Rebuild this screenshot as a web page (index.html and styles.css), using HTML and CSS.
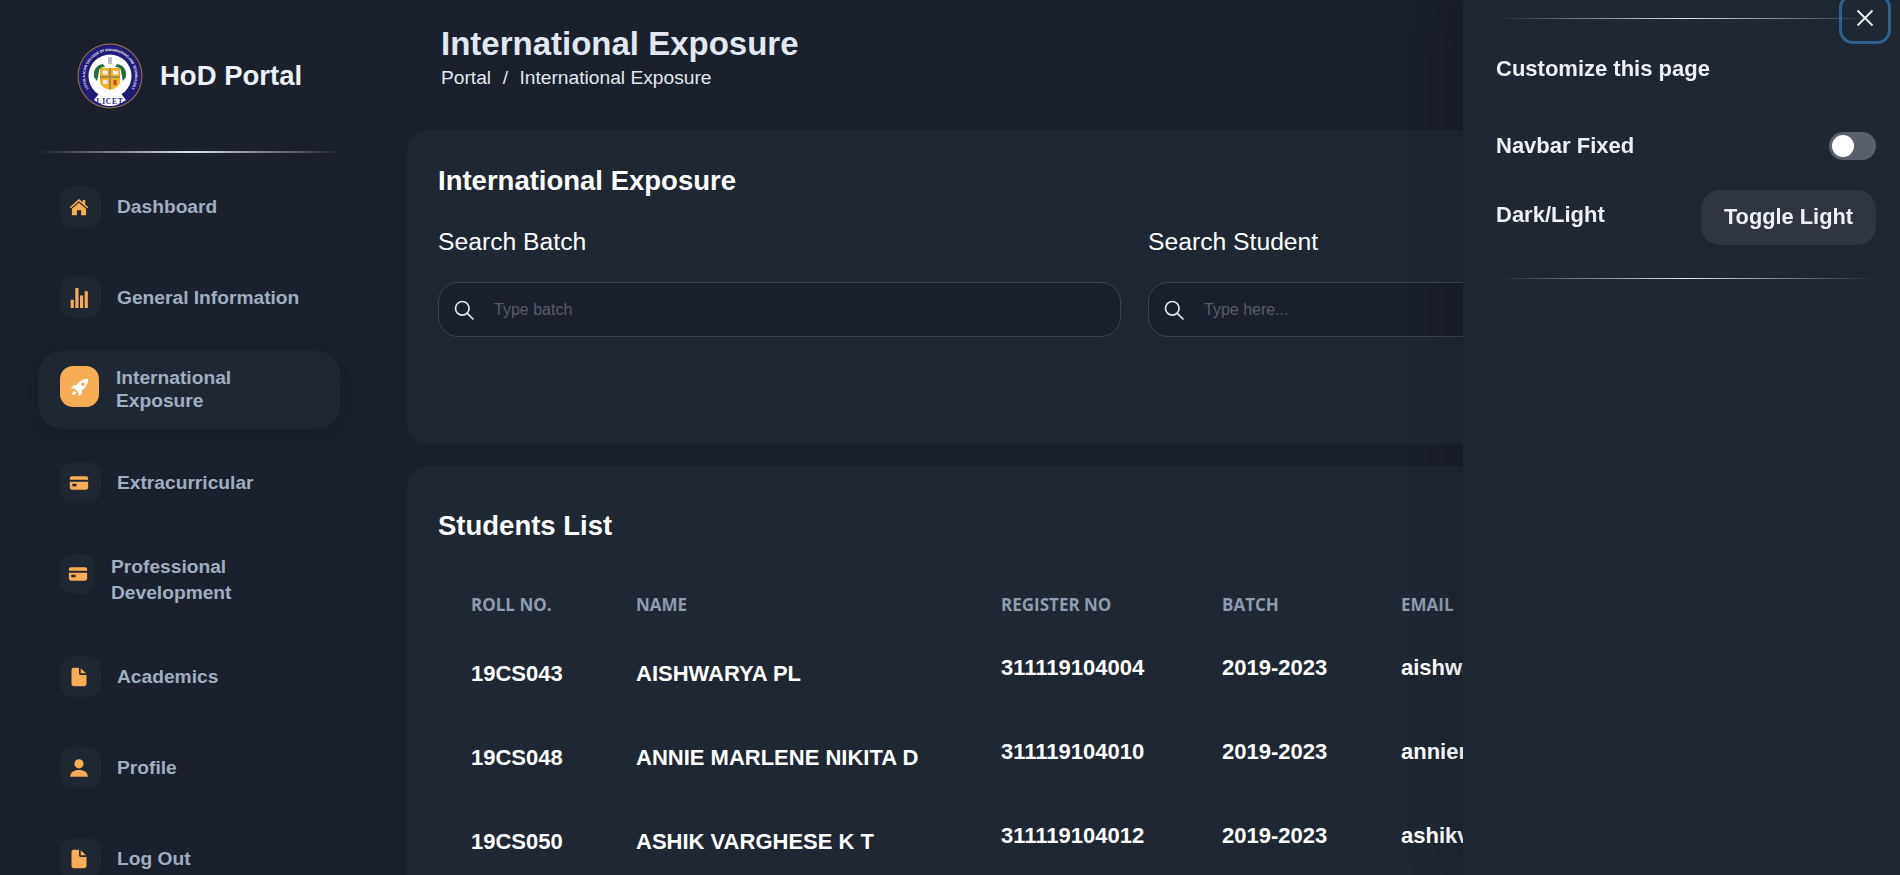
FILE: index.html
```html
<!DOCTYPE html>
<html lang="en">
<head>
<meta charset="utf-8">
<title>HoD Portal</title>
<link rel="stylesheet" href="styles.css">
</head>
<body>
<div class="app">
  <aside class="sidebar">
    <div class="brand">
      <svg class="logo" viewBox="0 0 66 66" aria-hidden="true">
        <defs>
          <path id="ringtext" d="M16.100 51.400 A25 25 0 1 1 49.900 51.400"/>
        </defs>
        <circle cx="33" cy="33" r="32.500" fill="#9a7a3c"/>
        <circle cx="33" cy="33" r="31.500" fill="#211a78"/>
        <circle cx="33" cy="33" r="21.500" fill="#fff"/>
        <path d="M17 57 L24 48 Q33 51 42 48 L49 57 Q33 69 17 57z" fill="#fff"/>
        <text class="logo-ring"><textPath href="#ringtext" startOffset="50%" text-anchor="middle">LOYOLA-ICAM COLLEGE OF ENGINEERING AND TECHNOLOGY</textPath></text>
        <text x="33" y="60.500" text-anchor="middle" class="logo-name">LICET</text>
        <path d="M17 34c-1-8 3-12 9-13l2 3c-4 0-6 2-6 4l-1 6-1 4z" fill="#23703c"/>
        <path d="M49 34c1-8-3-12-9-13l-2 3c4 0 6 2 6 4l1 6 1 4z" fill="#23703c"/>
        <path d="M31 14h4v7h-4z" fill="#b9bdc8"/>
        <path d="M23 25h20v14q0 5-10 8-10-3-10-8z" fill="#eeb01f"/>
        <path d="M32 25h2v21h-2zM23 33h20v2H23z" fill="#a58b4f"/>
        <path d="M25.500 27.500h5v4h-5zM36 27.500h5v4h-5zM26 37h4.500v4h-4.500z" fill="#eef0f0"/>
        <path d="M36.500 37h3v5h-3z" fill="#c8442c"/>
      </svg>
      <span class="brand-name">HoD Portal</span>
    </div>
    <div class="rule rule-side"></div>
    <nav class="nav">
      <a class="nav-item">
        <span class="nav-icon"><svg viewBox="0 0 24 24"><path d="M12 2.500 .8 12.200l1.300 1.300L12 5l9.900 8.500 1.300-1.300-3.700-3.200V3.500h-3v2.900z"/><path d="M12 7 3.500 14.200V22h6v-6h5v6h6v-7.800z"/></svg></span>
        <span class="nav-label">Dashboard</span>
      </a>
      <a class="nav-item">
        <span class="nav-icon"><svg viewBox="0 0 24 24"><path d="M2 14h3.800v10H2zM7.600 0h3.800v24H7.600zM13.200 9h3.800v15h-3.800zM18.800 4h3.800v20h-3.800z"/></svg></span>
        <span class="nav-label">General Information</span>
      </a>
      <a class="nav-item nav-item-active">
        <span class="nav-icon nav-icon-active"><svg viewBox="0 0 24 24"><path fill-rule="evenodd" d="M22 2c-6 .4-10.500 2.500-14 7.500L4 10l-3 3.500 5 .8 3.700 3.700.8 5 3.500-3 .5-4.200C19.500 12.500 21.600 8 22 2zM15.500 6.500a2.100 2.100 0 1 1 0 4.200 2.100 2.100 0 0 1 0-4.200z"/><path d="M5 16.500c-1.500.8-2.500 2.700-2.700 5.200 2.500-.2 4.400-1.200 5.200-2.700z"/></svg></span>
        <span class="nav-label nav-label-active">International<br>Exposure</span>
      </a>
      <a class="nav-item nav-item-spaced">
        <span class="nav-icon"><svg viewBox="0 0 24 24"><path fill-rule="evenodd" d="M3.500 4h17A2.500 2.500 0 0 1 23 6.500V8H1V6.500A2.500 2.500 0 0 1 3.500 4zM1 10.500h22v7a2.500 2.500 0 0 1-2.500 2.500h-17A2.500 2.500 0 0 1 1 17.500zM4 13v3h5v-3z"/></svg></span>
        <span class="nav-label">Extracurricular</span>
      </a>
      <a class="nav-item nav-item-tall">
        <span class="nav-icon nav-icon-narrow"><svg viewBox="0 0 24 24"><path fill-rule="evenodd" d="M3.500 4h17A2.500 2.500 0 0 1 23 6.500V8H1V6.500A2.500 2.500 0 0 1 3.500 4zM1 10.500h22v7a2.500 2.500 0 0 1-2.500 2.500h-17A2.500 2.500 0 0 1 1 17.500zM4 13v3h5v-3z"/></svg></span>
        <span class="nav-label nav-label-tall">Professional<br>Development</span>
      </a>
      <a class="nav-item">
        <span class="nav-icon"><svg viewBox="0 0 24 24"><path d="M5.500 1H12v6.500a2 2 0 0 0 2 2h7v11A2.500 2.500 0 0 1 18.500 23h-13A2.500 2.500 0 0 1 3 20.500v-17A2.500 2.500 0 0 1 5.500 1z"/><path d="M14 1.500l6.500 6h-6.500z"/></svg></span>
        <span class="nav-label">Academics</span>
      </a>
      <a class="nav-item">
        <span class="nav-icon"><svg viewBox="0 0 24 24"><circle cx="12" cy="7" r="5.500"/><path d="M1.500 22.500c0-5 4-8 10.500-8s10.500 3 10.500 8z"/></svg></span>
        <span class="nav-label">Profile</span>
      </a>
      <a class="nav-item">
        <span class="nav-icon"><svg viewBox="0 0 24 24"><path d="M5.500 1H12v6.500a2 2 0 0 0 2 2h7v11A2.500 2.500 0 0 1 18.500 23h-13A2.500 2.500 0 0 1 3 20.500v-17A2.500 2.500 0 0 1 5.500 1z"/><path d="M14 1.500l6.500 6h-6.500z"/></svg></span>
        <span class="nav-label">Log Out</span>
      </a>
    </nav>
  </aside>

  <main class="main">
    <header class="page-head">
      <h1 class="page-title">International Exposure</h1>
      <div class="crumbs"><span>Portal</span><span>/</span><span>International Exposure</span></div>
    </header>

    <section class="card card-search">
      <h2 class="card-title">International Exposure</h2>
      <div class="search-grid">
        <div class="field">
          <label class="field-label">Search Batch</label>
          <div class="search-box">
            <svg class="search-icon" viewBox="0 0 20 20"><circle cx="8.300" cy="8.300" r="6.800"/><path d="M13.300 13.300 19 19"/></svg>
            <input class="search-input" type="text" placeholder="Type batch">
          </div>
        </div>
        <div class="field">
          <label class="field-label">Search Student</label>
          <div class="search-box">
            <svg class="search-icon" viewBox="0 0 20 20"><circle cx="8.300" cy="8.300" r="6.800"/><path d="M13.300 13.300 19 19"/></svg>
            <input class="search-input" type="text" placeholder="Type here...">
          </div>
        </div>
      </div>
    </section>

    <section class="card card-list">
      <h2 class="card-title list-title">Students List</h2>
      <table class="students">
        <colgroup>
          <col class="col-roll"><col class="col-name"><col class="col-reg"><col class="col-batch"><col class="col-email">
        </colgroup>
        <thead>
          <tr><th>ROLL NO.</th><th>NAME</th><th>REGISTER NO</th><th>BATCH</th><th>EMAIL</th></tr>
        </thead>
        <tbody>
          <tr><td class="cell-low">19CS043</td><td class="cell-low">AISHWARYA PL</td><td class="cell-high">311119104004</td><td class="cell-high">2019-2023</td><td class="cell-high">aishwaryapl@licet.ac.in</td></tr>
          <tr><td class="cell-low">19CS048</td><td class="cell-low">ANNIE MARLENE NIKITA D</td><td class="cell-high">311119104010</td><td class="cell-high">2019-2023</td><td class="cell-high">anniemarlene@licet.ac.in</td></tr>
          <tr><td class="cell-low">19CS050</td><td class="cell-low">ASHIK VARGHESE K T</td><td class="cell-high">311119104012</td><td class="cell-high">2019-2023</td><td class="cell-high">ashikvarghese@licet.ac.in</td></tr>
        </tbody>
      </table>
    </section>
  </main>
</div>

<aside class="panel">
  <button class="panel-close" aria-label="Close"><svg viewBox="0 0 18 18"><path d="M1.500 1.500l15 15M16.500 1.500l-15 15"/></svg></button>
  <div class="rule rule-top"></div>
  <h3 class="panel-title">Customize this page</h3>
  <div class="panel-row row-nav">
    <span class="panel-label">Navbar Fixed</span>
    <span class="toggle"><span class="toggle-knob"></span></span>
  </div>
  <div class="panel-row row-theme">
    <span class="panel-label">Dark/Light</span>
    <button class="theme-btn">Toggle Light</button>
  </div>
  <div class="rule rule-bottom"></div>
</aside>
</body>
</html>
```

FILE: styles.css
```css
* { box-sizing: border-box; }
html, body { height: 100%; }
body {
  margin: 0;
  background: #1a202c;
  color: #fff;
  font-family: "Liberation Sans", Arial, sans-serif;
  overflow: hidden;
}
.app { display: flex; width: 1900px; height: 875px; overflow: hidden; }

/* Sidebar */
.sidebar { width: 407px; flex: none; }
.brand { display: flex; align-items: center; height: 151px; padding: 0 0 0 77px; gap: 17px; }
.logo { width: 66px; height: 66px; flex: none; }
.logo-ring { font: 700 3.400px "Liberation Sans", sans-serif; fill: #fff; }
.logo-name { font: 700 7.500px "Liberation Serif", serif; fill: #211a78; letter-spacing: .8px; }
.brand-name { font-size: 27.500px; font-weight: 700; color: #edf0f4; }
.rule { height: 1px; background: linear-gradient(90deg, rgba(224,225,226,0), #e0e1e2 50%, rgba(224,225,226,0)); }
.rule-side { width: 304px; height: 2px; margin-left: 38px; }
.nav { display: flex; flex-direction: column; margin-left: 38px; width: 302px; padding-top: 8px; }
.nav-item { display: flex; align-items: center; padding: 25px 0 25px 22px; }
.nav-item-active {
  background: #1f2733;
  border-radius: 24px;
  padding: 15px 0 22px 22px;
  margin: 8px 0;
  height: 78px;
  box-shadow: 0 4px 16px rgba(0, 0, 0, .06);
}
.nav-item-spaced { padding-bottom: 26px; }
.nav-item-tall { align-items: flex-start; padding-bottom: 26px; }
.nav-icon {
  width: 41px; height: 41px; flex: none;
  display: flex; align-items: center; justify-content: center;
  background: #1f2733;
  border-radius: 13px;
  margin-right: 16px;
}
.nav-icon svg { width: 20px; height: 20px; fill: #f6ad55; margin-right: 3px; overflow: visible; }
.nav-icon-active { width: 39px; background: #f6ad55; border-radius: 13px; margin-right: 17px; }
.nav-icon-active svg { fill: #fff; margin-right: 0; }
.nav-icon-narrow { width: 35px; height: 40px; }
.nav-icon-narrow svg { margin-right: 0; }
.nav-label { font-size: 19.200px; font-weight: 700; color: #a0aec0; white-space: nowrap; }
.nav-label-active { line-height: 23px; padding-top: 4px; }
.nav-label-tall { line-height: 25.500px; }

/* Main */
.main { flex: 1; min-width: 0; padding-right: 38px; }
.page-head { height: 130px; padding: 24px 0 0 34px; }
.page-title { margin: 0; font-size: 33px; line-height: 40px; font-weight: 700; color: #e2e8f0; }
.crumbs { display: flex; gap: 11.500px; font-size: 19.200px; line-height: 24px; margin-top: 2px; color: #e2e8f0; }
.card { background: #1f2733; border-radius: 20px; padding-left: 31px; padding-right: 31px; }
.card-search { padding-top: 34px; height: 314px; margin-bottom: 22px; }
.card-title { margin: 0; font-size: 27.500px; line-height: 34px; font-weight: 700; color: #fff; }
.search-grid { display: grid; grid-template-columns: 1fr 1fr; gap: 27px; margin-top: 30px; }
.field-label { display: block; font-size: 24.700px; line-height: 28px; margin-bottom: 26px; color: #fff; }
.search-box {
  display: flex; align-items: center;
  height: 55px;
  background: #1a202c;
  border: 1px solid #3d4451;
  border-radius: 20px;
  padding-left: 15px;
}
.search-icon { width: 20px; height: 20px; flex: none; fill: none; stroke: #e2e8f0; stroke-width: 1.700; stroke-linecap: round; }
.search-input {
  flex: 1; min-width: 0;
  margin-left: 18px;
  background: transparent; border: 0; outline: 0;
  font: 16px "Liberation Sans", sans-serif;
  color: #fff;
}
.search-input::placeholder { color: #575d69; opacity: 1; }

.card-list { padding-top: 43px; height: 500px; }
.list-title { margin-bottom: 42px; }
.students { border-collapse: collapse; table-layout: fixed; width: 1393px; }
.col-roll { width: 165px; }
.col-name { width: 365px; }
.col-reg { width: 221px; }
.col-batch { width: 179px; }
.students th {
  height: 47px;
  padding: 0 0 9px 33px;
  text-align: left;
  font: 700 17px "Open Sans", sans-serif;
  color: #8f9cb0;
  white-space: nowrap;
}
.students td {
  height: 84px;
  padding-left: 33px;
  font-size: 22px;
  font-weight: 700;
  color: #fff;
  white-space: nowrap;
  overflow: hidden;
}
.students .cell-low { padding-top: 0; }
.students .cell-high { padding-bottom: 13px; }

/* Settings panel */
.panel {
  position: fixed; top: 0; right: 0;
  width: 437px; height: 875px;
  background: #1f2733;
  box-shadow: 0 0 50px rgba(0, 0, 0, .22);
  padding: 0 24px 0 33px;
}
.rule-top { margin-top: 18px; }
.panel-close {
  position: absolute; top: -6px; right: 9px;
  width: 52px; height: 50px;
  display: flex; align-items: center; justify-content: center;
  background: transparent;
  border: 3px solid #2c6190;
  border-radius: 14px;
  padding: 0 0 2px;
}
.panel-close svg { width: 18px; height: 18px; fill: none; stroke: #f2f4f7; stroke-width: 1.800; }
.panel-title { margin: 37px 0 0; font-size: 22px; line-height: 26px; font-weight: 700; color: #edf0f4; }
.panel-row { display: flex; justify-content: space-between; }
.panel-label { font-size: 22px; line-height: 26px; font-weight: 700; color: #edf0f4; }
.row-nav { margin-top: 50px; height: 33px; }
.row-nav .panel-label { margin-top: 1px; }
.toggle { width: 47px; height: 28px; border-radius: 14px; background: #5a606b; padding: 3px; }
.toggle-knob { display: block; width: 22px; height: 22px; border-radius: 50%; background: #fff; }
.row-theme { margin-top: 25px; height: 55px; }
.row-theme .panel-label { margin-top: 12px; }
.theme-btn {
  width: 175px; height: 55px;
  background: #2f3541;
  border: 0;
  border-radius: 19px;
  padding: 0 0 2px;
  font: 700 21.800px "Liberation Sans", sans-serif;
  color: #edf0f4;
}
.rule-bottom { margin-top: 33px; }
```
